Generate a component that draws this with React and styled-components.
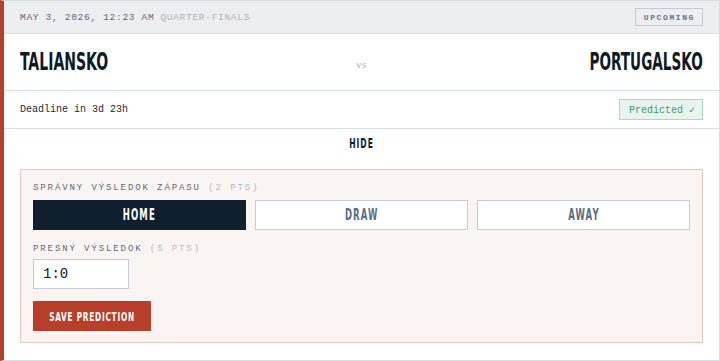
import React from "react";
import styled, { createGlobalStyle } from "styled-components";

const Global = createGlobalStyle`
  html, body { margin: 0; padding: 0; background: #ffffff; }
  body { font-family: "Liberation Mono", "DejaVu Sans Mono", monospace; }
  * { box-sizing: border-box; }
`;

const display = `"DejaVu Sans Condensed", "DejaVu Sans", sans-serif`;
const mono = `"Liberation Mono", "DejaVu Sans Mono", monospace`;

/* narrow display lettering (stands in for a Bebas-like face) */
const Squeeze = styled.span`
  display: inline-block;
  flex: none;
  white-space: nowrap;
  transform: scaleX(${(p) => p.$k || 0.63});
  transform-origin: ${(p) => p.$origin || "center"};
`;

const Card = styled.div`
  width: 720px;
  height: 361px;
  border: 1px solid #d9dde4;
  border-left: 4px solid #b8402a;
  display: flex;
  flex-direction: column;
  background: #fff;
`;

const Header = styled.div`
  height: 33px;
  background: #eceef1;
  border-bottom: 1px solid #d9dde4;
  display: flex;
  align-items: center;
  justify-content: space-between;
  padding: 0 16px;
`;

const Meta = styled.div`
  font-family: ${mono};
  font-size: 9.5px;
  letter-spacing: 0.7px;
  color: #636c79;
  text-transform: uppercase;
`;

const Stage = styled.span`
  color: #a9b4c2;
  margin-left: 6px;
`;

const Badge = styled.span`
  font-family: ${mono};
  font-size: 8px;
  letter-spacing: 1.6px;
  color: #6b7480;
  border: 1px solid #c3cad4;
  height: 18px;
  padding: 0 7px 0 8px;
  display: inline-flex;
  align-items: center;
  font-weight: bold;
`;

const Teams = styled.div`
  height: 57px;
  border-bottom: 1px solid #d9dde4;
  display: grid;
  grid-template-columns: 1fr auto 1fr;
  align-items: center;
  padding: 0 16px;
`;

const Team = styled.div`
  font-family: ${display};
  font-weight: bold;
  font-size: 24px;
  color: #0f1a26;
  text-align: ${(p) => p.$align};
  text-transform: uppercase;
  padding-bottom: 1px;
`;

const Vs = styled.div`
  font-family: ${mono};
  font-size: 9px;
  color: #aab6c6;
  padding-top: 7px;
`;

const DeadlineRow = styled.div`
  height: 38px;
  border-bottom: 1px solid #d9dde4;
  display: flex;
  align-items: center;
  justify-content: space-between;
  padding: 0 16px;
`;

const Deadline = styled.span`
  font-family: ${mono};
  font-size: 10px;
  color: #1d2733;
`;

const Predicted = styled.span`
  font-family: ${mono};
  font-size: 10px;
  color: #3a9a6c;
  background: #e8f4ee;
  border: 1px solid #a9d9c2;
  height: 21px;
  padding: 0 7px 0 9px;
  display: inline-flex;
  align-items: center;
`;

const Body = styled.div`
  flex: 1;
  padding: 0 16px 16px;
  display: flex;
  flex-direction: column;
`;

const HideButton = styled.button`
  align-self: center;
  height: 28px;
  margin-bottom: 12px;
  border: none;
  background: none;
  font-family: ${display};
  font-weight: bold;
  font-size: 13.5px;
  letter-spacing: 1.5px;
  color: #0f1f2e;
  padding: 0 4px;
  cursor: pointer;
  display: flex;
  align-items: center;
  justify-content: center;
`;

const Panel = styled.div`
  background: #faf4f2;
  border: 1px solid #e9c6bd;
  padding: 12px 12px 11px;
  display: flex;
  flex-direction: column;
`;

const Label = styled.div`
  font-family: ${mono};
  font-size: 9px;
  letter-spacing: 1.9px;
  color: #5f6877;
  height: 12px;
  line-height: 12px;
  margin-bottom: ${(p) => p.$mb}px;
  margin-top: ${(p) => p.$mt || 0}px;
  text-transform: uppercase;
`;

const Pts = styled.span`
  color: #b3bcc8;
`;

const Choices = styled.div`
  display: grid;
  grid-template-columns: repeat(3, 1fr);
  gap: 9px;
`;

const Choice = styled.button`
  height: 30px;
  border: 1px solid ${(p) => (p.$active ? "#0f1f2e" : "#c5ccd7")};
  background: ${(p) => (p.$active ? "#0f1f2e" : "#ffffff")};
  color: ${(p) => (p.$active ? "#ffffff" : "#5c6b84")};
  font-family: ${display};
  font-weight: bold;
  font-size: 15px;
  letter-spacing: 1.8px;
  cursor: pointer;
  padding: 0;
  display: flex;
  align-items: center;
  justify-content: center;
`;

const ScoreInput = styled.input`
  width: 96px;
  height: 30px;
  border: 1px solid #c5ccd7;
  background: #fff;
  font-family: ${mono};
  font-size: 14px;
  color: #111827;
  padding: 0 9px;
  outline: none;
`;

const SaveButton = styled.button`
  align-self: flex-start;
  margin-top: 12px;
  width: 118px;
  height: 30px;
  border: none;
  background: #b8402a;
  color: #fff;
  font-family: ${display};
  font-weight: bold;
  font-size: 13px;
  letter-spacing: 1.2px;
  cursor: pointer;
  padding: 0;
  display: flex;
  align-items: center;
  justify-content: center;
  overflow: visible;
`;

export default function App() {
  return (
    <>
      <Global />
      <Card>
        <Header>
          <Meta>
            May 3, 2026, 12:23 AM<Stage>Quarter-finals</Stage>
          </Meta>
          <Badge>UPCOMING</Badge>
        </Header>
        <Teams>
          <Team $align="left">
            <Squeeze $k={0.65} $origin="left">Taliansko</Squeeze>
          </Team>
          <Vs>vs</Vs>
          <Team $align="right">
            <Squeeze $k={0.63} $origin="right">Portugalsko</Squeeze>
          </Team>
        </Teams>
        <DeadlineRow>
          <Deadline>Deadline in 3d 23h</Deadline>
          <Predicted>Predicted ✓</Predicted>
        </DeadlineRow>
        <Body>
          <HideButton>
            <Squeeze>HIDE</Squeeze>
          </HideButton>
          <Panel>
            <Label $mb={6}>
              Správny výsledok zápasu <Pts>(2 pts)</Pts>
            </Label>
            <Choices>
              <Choice $active>
                <Squeeze>HOME</Squeeze>
              </Choice>
              <Choice>
                <Squeeze>DRAW</Squeeze>
              </Choice>
              <Choice>
                <Squeeze>AWAY</Squeeze>
              </Choice>
            </Choices>
            <Label $mt={13} $mb={4}>
              Presný výsledok <Pts>(5 pts)</Pts>
            </Label>
            <ScoreInput defaultValue="1:0" />
            <SaveButton>
              <Squeeze>SAVE PREDICTION</Squeeze>
            </SaveButton>
          </Panel>
        </Body>
      </Card>
    </>
  );
}
